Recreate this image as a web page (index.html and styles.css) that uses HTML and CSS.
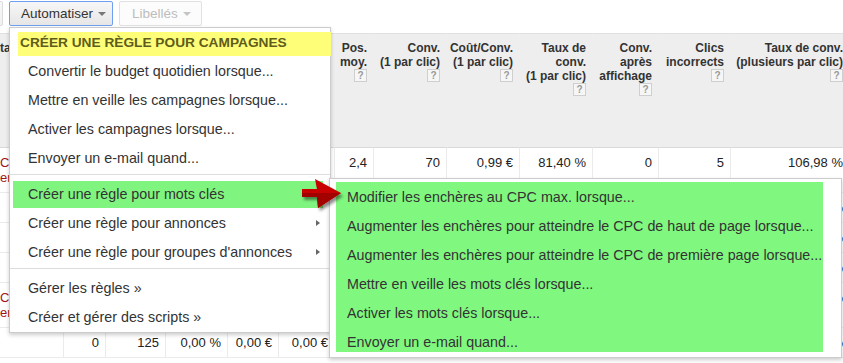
FILE: index.html
```html
<!DOCTYPE html>
<html lang="fr">
<head>
    <meta charset="UTF-8">
    <meta name="viewport" content="width=device-width, initial-scale=1.0">
    <title>Automatiser - règles</title>
    <link rel="stylesheet" href="styles.css">
</head>
<body>
    <div class="page">
        <div class="toolbar">
            <div class="btn btn-prev"></div>
            <div class="btn btn-open">Automatiser <span class="caret"></span></div>
            <div class="btn btn-disabled">Libellés <span class="caret"></span></div>
        </div>

        <!-- les cellules cachées par le menu restent vides -->
        <table class="stats">
            <colgroup>
                <col class="c-name">
                <col class="c-clicks">
                <col class="c-impr">
                <col class="c-ctr">
                <col class="c-cpc">
                <col class="c-cost">
                <col class="c-pos">
                <col class="c-conv">
                <col class="c-cost-conv">
                <col class="c-rate">
                <col class="c-view">
                <col class="c-invalid">
                <col class="c-rate-many">
            </colgroup>
            <thead>
                <tr>
                    <th class="name">État</th>
                    <th></th><th></th><th></th><th></th><th></th>
                    <th>Pos.<br>moy.<span class="help">?</span></th>
                    <th>Conv.<br>(1 par clic)<span class="help">?</span></th>
                    <th>Coût/Conv.<br>(1 par clic)<span class="help">?</span></th>
                    <th>Taux de<br>conv.<br>(1 par clic)<span class="help">?</span></th>
                    <th>Conv.<br>après<br>affichage<span class="help">?</span></th>
                    <th>Clics<br>incorrects<span class="help">?</span></th>
                    <th>Taux de conv.<br>(plusieurs par clic)<span class="help">?</span></th>
                </tr>
            </thead>
            <tbody>
                <tr>
                    <td class="name">Ca<br>er</td>
                    <td></td><td></td><td></td><td></td><td></td>
                    <td>2,4</td><td>70</td><td>0,99 €</td><td>81,40 %</td><td>0</td><td>5</td><td>106,98 %</td>
                </tr>
                <tr>
                    <td class="name"></td>
                    <td></td><td></td><td></td><td></td><td></td>
                    <td></td><td></td><td></td><td></td><td></td><td></td><td>41,67 %</td>
                </tr>
                <tr>
                    <td class="name"></td>
                    <td></td><td></td><td></td><td></td><td></td>
                    <td></td><td></td><td></td><td></td><td></td><td></td><td>20,00 %</td>
                </tr>
                <tr>
                    <td class="name"></td>
                    <td></td><td></td><td></td><td></td><td></td>
                    <td></td><td></td><td></td><td></td><td></td><td></td><td>35,48 %</td>
                </tr>
                <tr>
                    <td class="name">Ca<br>er</td>
                    <td></td><td></td><td></td><td></td><td></td>
                    <td></td><td></td><td></td><td></td><td></td><td></td><td>0,00 %</td>
                </tr>
                <tr>
                    <td class="name"></td>
                    <td>0</td><td>125</td><td>0,00 %</td><td>0,00 €</td><td>0,00 €</td>
                    <td></td><td></td><td></td><td></td><td></td><td></td><td>0,00 %</td>
                </tr>
            </tbody>
        </table>

        <!-- menu "Automatiser" ouvert -->
        <ul class="menu">
            <li class="menu-title">CRÉER UNE RÈGLE POUR CAMPAGNES</li>
            <li class="menu-item">Convertir le budget quotidien lorsque...</li>
            <li class="menu-item">Mettre en veille les campagnes lorsque...</li>
            <li class="menu-item">Activer les campagnes lorsque...</li>
            <li class="menu-item">Envoyer un e-mail quand...</li>
            <li class="menu-sep"></li>
            <li class="menu-item is-marked">Créer une règle pour mots clés</li>
            <li class="menu-item has-sub">Créer une règle pour annonces</li>
            <li class="menu-item has-sub">Créer une règle pour groupes d'annonces</li>
            <li class="menu-sep"></li>
            <li class="menu-item">Gérer les règles »</li>
            <li class="menu-item">Créer et gérer des scripts »</li>
        </ul>

        <div class="submenu">
            <ul class="submenu-list">
                <li>Modifier les enchères au CPC max. lorsque...</li>
                <li>Augmenter les enchères pour atteindre le CPC de haut de page lorsque...</li>
                <li>Augmenter les enchères pour atteindre le CPC de première page lorsque...</li>
                <li>Mettre en veille les mots clés lorsque...</li>
                <li>Activer les mots clés lorsque...</li>
                <li>Envoyer un e-mail quand...</li>
            </ul>
        </div>

        <svg class="pointer" width="52" height="42" viewBox="0 0 52 42">
            <defs>
                <filter id="shade" x="-20%" y="-20%" width="150%" height="160%">
                    <feDropShadow dx="2" dy="3" stdDeviation="1.6" flood-color="#000" flood-opacity="0.45"/>
                </filter>
            </defs>
            <g filter="url(#shade)">
                <path d="M6 15 H21 L19 5 L45 19 L22 34 L21 23 H6 Z" fill="#c80000"/>
                <path d="M6 19 H45 L22 34 L21 23 H6 Z" fill="#a30000"/>
            </g>
        </svg>
    </div>
</body>
</html>
```

FILE: styles.css
```css
body {
    margin: 0;
    font-family: "Liberation Sans", Arial, sans-serif;
    font-size: 13px;
    color: #222;
}
.page {
    position: relative;
    width: 843px;
    height: 363px;
    overflow: hidden;
    background: #fff;
}

/* boutons du haut */
.toolbar {
    display: flex;
    gap: 6px;
    height: 33px;
    padding-top: 1px;
    margin-left: -10px;
    box-sizing: border-box;
}
.btn {
    display: flex;
    align-items: center;
    height: 25px;
    box-sizing: border-box;
    border: 1px solid #dcdcdc;
    border-radius: 2px;
    background: linear-gradient(#f8f8f8, #f1f1f1);
    color: #333;
    font-size: 13.5px;
    white-space: nowrap;
}
.btn-prev {
    width: 13px;
}
.btn-open {
    width: 104px;
    padding-left: 11px;
    border-color: #6f9ff2;
    background: linear-gradient(#f7f7f7, #e6e6e6);
}
.btn-disabled {
    width: 83px;
    padding-left: 12px;
    border-color: #e1e1e1;
    background: #fcfcfc;
    color: #bcbcbc;
}
.caret {
    display: inline-block;
    margin-left: 5px;
    margin-top: 1px;
    border-top: 4px solid #777;
    border-left: 4px solid transparent;
    border-right: 4px solid transparent;
}
.btn-disabled .caret {
    border-top-color: #c4c4c4;
}

/* tableau de stats */
.stats {
    table-layout: fixed;
    width: 850px;
    border-spacing: 0;
}
.c-name { width: 64px; }
.c-clicks { width: 42px; }
.c-impr { width: 60px; }
.c-ctr { width: 62px; }
.c-cpc { width: 51px; }
.c-cost { width: 56px; }
.c-pos { width: 39px; }
.c-conv, .c-cost-conv, .c-rate { width: 73px; }
.c-view { width: 66px; }
.c-invalid { width: 72px; }
.c-rate-many { width: 119px; }

.stats th {
    height: 115px;
    box-sizing: border-box;
    padding: 7px 6px 0 0;
    background: #eee;
    border-top: 1px solid #e0e0e0;
    border-bottom: 1px solid #d9d9d9;
    border-right: 1px solid #eee;
    font-size: 12px;
    font-weight: bold;
    line-height: 14px;
    color: #333;
    text-align: right;
    vertical-align: top;
    white-space: nowrap;
}
.stats th.name {
    text-align: left;
    text-indent: -8px;
}
.help {
    display: block;
    width: 13px;
    height: 13px;
    margin-left: auto;
    box-sizing: border-box;
    border: 1px solid #cfcfcf;
    background: #f6f6f6;
    color: #9a9a9a;
    font-size: 10px;
    line-height: 11px;
    text-align: center;
    text-indent: 0;
}
.stats td {
    padding: 7px 6px 7px 0;
    border-right: 1px solid #ebebeb;
    border-bottom: 1px solid #ebebeb;
    line-height: 15px;
    text-align: right;
    vertical-align: top;
    white-space: nowrap;
    overflow: hidden;
}
.stats td.name {
    text-align: left;
    color: #a31515;
}

/* menu déroulant */
.menu {
    position: absolute;
    left: 9px;
    top: 27px;
    width: 322px;
    box-sizing: border-box;
    margin: 0;
    padding: 0 0 1px;
    list-style: none;
    background: #fff;
    border: 1px solid rgba(0, 0, 0, 0.2);
    box-shadow: 0 2px 4px rgba(0, 0, 0, 0.2);
    color: #333;
    font-size: 14.3px;
}
.menu-title {
    height: 24px;
    margin: 4px -1px 0 8px;
    padding-left: 2px;
    line-height: 22px;
    background: #fefe78;
    color: #5e5c1a;
    font-size: 13.7px;
    font-weight: bold;
    white-space: nowrap;
}
.menu-item {
    display: flex;
    align-items: center;
    height: 29px;
    padding-left: 18px;
    padding-right: 10px;
    white-space: nowrap;
}
.menu-item.is-marked {
    background: linear-gradient(#7ff57f, #7ff57f) 3px 2px / 310px 28px no-repeat;
}
.menu-item.has-sub::after {
    content: "";
    margin-left: auto;
    border-left: 4px solid #666;
    border-top: 3px solid transparent;
    border-bottom: 3px solid transparent;
}
.menu-sep {
    height: 1px;
    margin: 2px 0 4px;
    background: #ddd;
}

/* sous-menu mots clés */
.submenu {
    position: absolute;
    left: 329px;
    top: 178px;
    width: 513px;
    box-sizing: border-box;
    padding: 3px 18px 5px 6px;
    background: #fff;
    border: 1px solid rgba(0, 0, 0, 0.2);
    box-shadow: 0 2px 4px rgba(0, 0, 0, 0.2);
}
.submenu-list {
    margin: 0;
    padding: 1px 0 0 11px;
    list-style: none;
    background: #80f880;
    color: #333;
    font-size: 14.3px;
}
.submenu-list li {
    height: 29px;
    line-height: 29px;
    white-space: nowrap;
}
.submenu-list li:last-child {
    height: 24px;
}

.pointer {
    position: absolute;
    left: 296px;
    top: 174px;
}
```
